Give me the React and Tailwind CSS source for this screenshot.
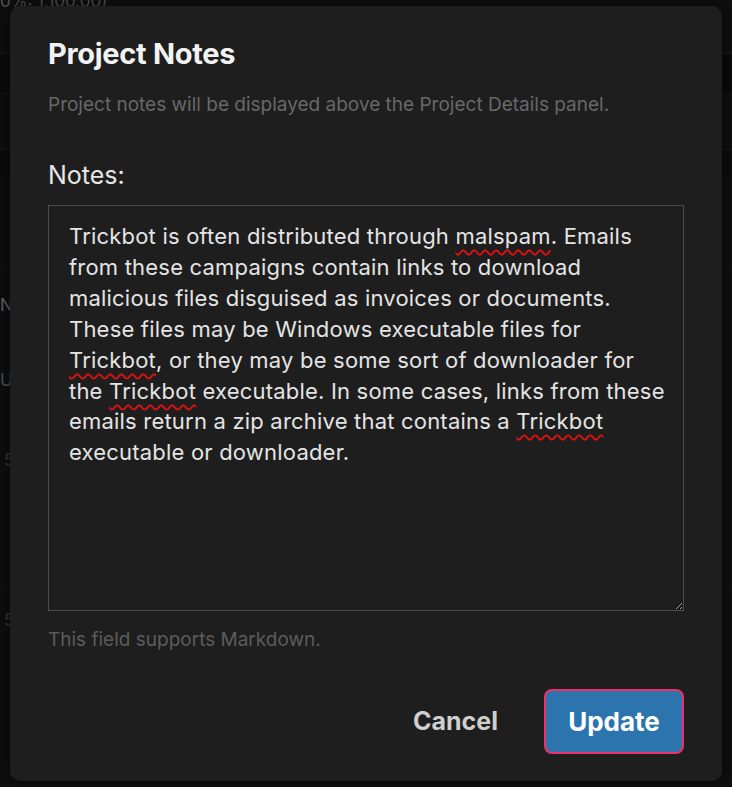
import React from 'react';

const Misspelled = ({ children }) => (
  <span className="underline decoration-wavy decoration-[#d11] decoration-[1.5px] underline-offset-[5px]">{children}</span>
);

const BackgroundRows = () => (
  <div className="flex flex-col text-[#4a4a4a] text-[17px]">
    <div className="h-[12px] -mt-[6px] text-[#555] whitespace-nowrap leading-[14px]">0%: 1,100.00)</div>
    <div className="h-[48px] border-b border-[#1a1a1a]" />
    <div className="h-[40px] border-b border-[#161616] bg-[#0b0b0b]" />
    <div className="h-[56px] border-b border-[#1a1a1a]" />
    <div className="h-[26px] bg-[#0c0c0c]" />
    <div className="h-[90px] border-b border-[#161616]" />
    <div className="h-[80px] flex items-center text-[#666]">N</div>
    <div className="h-[70px] flex items-center text-[#555]">U</div>
    <div className="h-[90px] flex items-center pl-[4px] text-[#3c3c3c]">5</div>
    <div className="h-[80px] border-b border-[#161616]" />
    <div className="h-[70px] flex items-center pl-[4px] text-[#3c3c3c]">5</div>
  </div>
);

export default function App() {
  return (
    <div className="relative w-[732px] h-[787px] overflow-hidden bg-[#0f0f0f]" style={{ fontFamily: 'Inter, "Noto Sans", sans-serif' }}>
      <BackgroundRows />

      <div className="absolute left-[10px] top-[6px] w-[712px] h-[775px] rounded-[10px] bg-[#1e1e1e] shadow-[0_0_20px_rgba(0,0,0,0.6)] px-[38px] pt-[30px] flex flex-col">
        <h2 className="text-[29px] font-bold text-[#f2f2f2] leading-[36px] tracking-[-0.3px]">Project Notes</h2>
        <p className="mt-[23px] text-[19px] text-[#686868] leading-[20px]">
          Project notes will be displayed above the Project Details panel.
        </p>

        <label className="mt-[45px] text-[25px] text-[#e6e6e6] leading-[30px]">Notes:</label>

        <div className="mt-[15px] w-[636px] h-[406px] border border-[#4d4d4d] bg-[#1e1e1e] resize overflow-auto pl-[20px] pr-[17px] pt-[15px]">
          <p className="text-[22px] leading-[30.9px] tracking-[0.2px] text-[#e4e4e4]">
            Trickbot is often distributed through <Misspelled>malspam</Misspelled>. Emails from these campaigns contain links to download malicious files disguised as invoices or documents. These files may be Windows executable files for <Misspelled>Trickbot</Misspelled>, or they may be some sort of downloader for the <Misspelled>Trickbot</Misspelled> executable. In some cases, links from these emails return a zip archive that contains a <Misspelled>Trickbot</Misspelled> executable or downloader.
          </p>
        </div>

        <p className="mt-[19px] text-[19px] text-[#5c5c5c] leading-[20px]">This field supports Markdown.</p>

        <div className="mt-[39px] flex justify-end items-center gap-[46px]">
          <button className="text-[25px] font-bold text-[#cfcfcf]">Cancel</button>
          <button className="w-[140px] h-[65px] rounded-[8px] bg-[#2b74ad] border-2 border-[#f0306a] text-[26px] font-bold text-white">
            Update
          </button>
        </div>
      </div>
    </div>
  );
}
